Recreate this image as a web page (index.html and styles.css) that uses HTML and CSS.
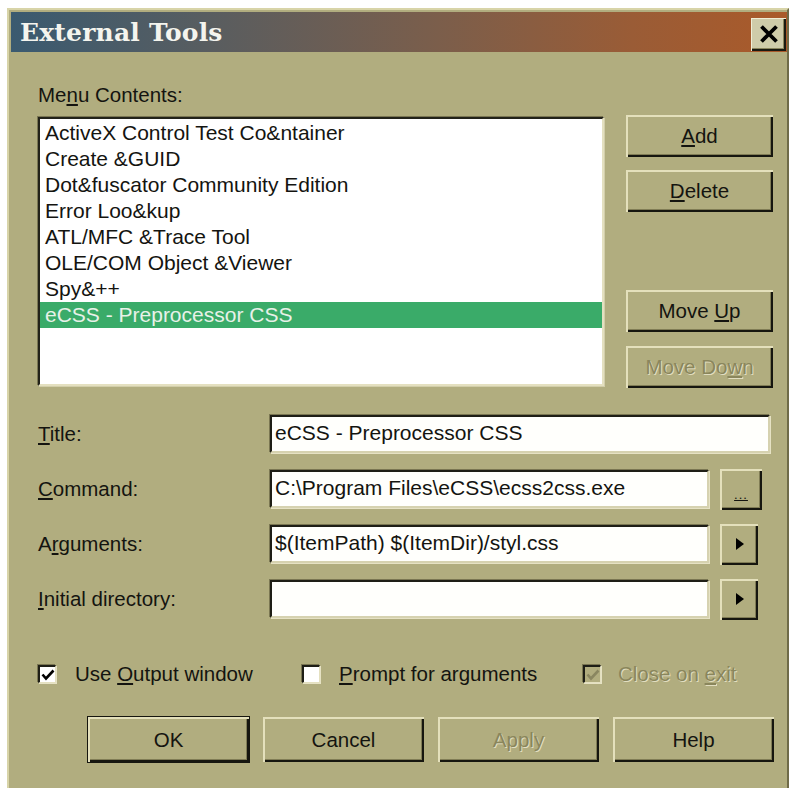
FILE: index.html
```html
<!DOCTYPE html>
<html>
<head>
<meta charset="utf-8">
<title>External Tools</title>
<link rel="stylesheet" href="styles.css">
</head>
<body>
<div class="window">
  <div class="titlebar">
    <span class="title">External Tools</span>
    <button class="close" aria-label="Close">
      <svg width="20" height="18" viewBox="0 0 20 18"><path d="M2.5 1.5 L17.5 16.5 M17.5 1.5 L2.5 16.5" stroke="#000" stroke-width="3.8" fill="none"/></svg>
    </button>
  </div>
  <div class="content">
    <div class="label menu-label">Me<u>n</u>u Contents:</div>
    <div class="list-row">
      <ul class="listbox">
        <li>ActiveX Control Test Co&amp;ntainer</li>
        <li>Create &amp;GUID</li>
        <li>Dot&amp;fuscator Community Edition</li>
        <li>Error Loo&amp;kup</li>
        <li>ATL/MFC &amp;Trace Tool</li>
        <li>OLE/COM Object &amp;Viewer</li>
        <li>Spy&amp;++</li>
        <li class="selected">eCSS - Preprocessor CSS</li>
      </ul>
      <div class="side-buttons">
        <button class="btn btn-add"><u>A</u>dd</button>
        <button class="btn btn-delete"><u>D</u>elete</button>
        <button class="btn btn-up">Move <u>U</u>p</button>
        <button class="btn btn-down disabled">Move Do<u>w</u>n</button>
      </div>
    </div>

    <div class="fields">
      <div class="label field-label"><u>T</u>itle:</div>
      <div class="field-wrap">
        <div class="input input-wide">eCSS - Preprocessor CSS</div>
      </div>

      <div class="label field-label"><u>C</u>ommand:</div>
      <div class="field-wrap">
        <div class="input">C:\Program Files\eCSS\ecss2css.exe</div>
        <button class="btn mini browse"><span class="dots">...</span></button>
      </div>

      <div class="label field-label">A<u>r</u>guments:</div>
      <div class="field-wrap">
        <div class="input">$(ItemPath) $(ItemDir)/styl.css</div>
        <button class="btn mini arrow"><span class="tri"></span></button>
      </div>

      <div class="label field-label"><u>I</u>nitial directory:</div>
      <div class="field-wrap">
        <div class="input"></div>
        <button class="btn mini arrow"><span class="tri"></span></button>
      </div>
    </div>

    <div class="checks">
      <div class="check check-output">
        <span class="box"><svg width="14" height="12" viewBox="0 0 14 12"><path d="M1.5 5.5 L5 9.5 L12.5 1.5" stroke="#000" stroke-width="2.6" fill="none"/></svg></span>
        <span class="label">Use <u>O</u>utput window</span>
      </div>
      <div class="check check-prompt">
        <span class="box"></span>
        <span class="label"><u>P</u>rompt for arguments</span>
      </div>
      <div class="check check-close disabled">
        <span class="box"><svg width="14" height="12" viewBox="0 0 14 12"><path d="M1.5 5.5 L5 9.5 L12.5 1.5" stroke="#8a8660" stroke-width="2.6" fill="none"/></svg></span>
        <span class="label">Close on <u>e</u>xit</span>
      </div>
    </div>

    <div class="actions">
      <button class="btn wide default">OK</button>
      <button class="btn wide">Cancel</button>
      <button class="btn wide disabled">Apply</button>
      <button class="btn wide">Help</button>
    </div>
  </div>
</div>
</body>
</html>
```

FILE: styles.css
```css
html, body {
  margin: 0;
  padding: 0;
  background: #ffffff;
}

body {
  font-family: "Liberation Sans", Arial, sans-serif;
  color: #141410;
}

.window {
  margin: 8px 0 0 7px;
  width: 782px;
  height: 790px;
  box-sizing: border-box;
  background: #b1ad7f;
  border-top: 2px solid #d8d4a8;
  border-left: 2px solid #d8d4a8;
  border-right: 2px solid #6f6b48;
  padding: 2px 0 0 2px;
}

/* caption bar */
.titlebar {
  height: 40px;
  width: 776px;
  display: flex;
  align-items: center;
  justify-content: space-between;
  background: linear-gradient(90deg, #3a5a70 0%, #585d60 25%, #7b5e4b 55%, #9a5c36 80%, #aa5a2a 100%);
  padding: 0 1px 0 9px;
  box-sizing: border-box;
}

.title {
  font-family: "DejaVu Serif", "Liberation Serif", serif;
  font-weight: bold;
  font-size: 25px;
  color: #f4f4ee;
  letter-spacing: 0.2px;
  margin-top: 1px;
}

.close {
  width: 35px;
  height: 33px;
  margin-top: 4px;
  padding: 0;
  display: flex;
  align-items: center;
  justify-content: center;
  background: #cfccaa;
  border: none;
  box-shadow: inset 1px 1px 0 #f0eed6, inset -2px -2px 0 #1a1a12, inset -3px -3px 0 #8a865e;
}

.content {
  padding: 32px 0 0 27px;
}

.label {
  font-size: 20.5px;
  line-height: 22px;
  white-space: nowrap;
}

u {
  text-decoration-thickness: 2px;
  text-underline-offset: 2px;
}

/* list + side buttons */
.list-row {
  display: flex;
  margin-top: 9px;
  height: 273px;
}

.listbox {
  list-style: none;
  margin: 2px 0 0 0;
  padding: 1px 0 0 0;
  width: 566px;
  height: 269px;
  box-sizing: border-box;
  background: #ffffff;
  border-top: 2px solid #222219;
  border-left: 2px solid #222219;
  border-right: 2px solid #e4e0c0;
  border-bottom: 2px solid #e4e0c0;
  box-shadow: -1px -1px 0 #7a7652, 1px 1px 0 #d2ceaa;
}

.listbox li {
  height: 26px;
  line-height: 26px;
  font-size: 21px;
  padding-left: 5px;
  white-space: nowrap;
}

.listbox li.selected {
  background: #3aab69;
  color: #e8f1e8;
}

.side-buttons {
  display: flex;
  flex-direction: column;
  margin-left: 22px;
}

.btn {
  font-family: "Liberation Sans", Arial, sans-serif;
  font-size: 20.5px;
  color: #141410;
  background: #b1ad7f;
  border: none;
  padding: 0;
  box-sizing: border-box;
  box-shadow: inset 2px 2px 0 #e4e0bc, inset -2px -2px 0 #16160f, inset -3px -3px 0 #807c55;
}

.side-buttons .btn {
  width: 147px;
  height: 42px;
}

.btn-delete { margin-top: 13px; }
.btn-up { margin-top: 78px; }
.btn-down { margin-top: 14px; }

.disabled,
.btn.disabled {
  color: #8a865c;
  text-shadow: 1px 1px 0 #e2dec0;
}

/* fields */
.fields {
  display: grid;
  grid-template-columns: 232px 1fr;
  row-gap: 17px;
  margin-top: 27px;
}

.field-label {
  align-self: center;
}

.field-wrap {
  display: flex;
  align-items: center;
  height: 38px;
}

.input {
  width: 439px;
  height: 38px;
  box-sizing: border-box;
  background: #fffffc;
  font-size: 21px;
  line-height: 32px;
  padding-left: 3px;
  white-space: nowrap;
  border-top: 2px solid #1e1e16;
  border-left: 2px solid #1e1e16;
  border-right: 2px solid #d6d2b0;
  border-bottom: 2px solid #d6d2b0;
  box-shadow: -1px -1px 0 #7a7652, 1px 1px 0 #e6e2c4;
}

.input-wide {
  width: 500px;
}

.btn.mini {
  height: 41px;
  margin-left: 11px;
  display: flex;
  align-items: center;
  justify-content: center;
}

.browse { width: 42px; }
.arrow { width: 38px; }

.dots {
  font-size: 13px;
  line-height: 1;
  margin-top: 10px;
  letter-spacing: 1px;
  text-decoration: underline;
}

.tri {
  width: 0;
  height: 0;
  border-top: 6px solid transparent;
  border-bottom: 6px solid transparent;
  border-left: 8px solid #000;
  margin-left: 2px;
}

/* checkboxes */
.checks {
  display: flex;
  align-items: center;
  margin-top: 45px;
  height: 22px;
}

.check {
  display: flex;
  align-items: center;
}

.check-output { width: 264px; }
.check-prompt { width: 281px; }

.box {
  width: 18px;
  height: 18px;
  box-sizing: border-box;
  background: #ffffff;
  border-top: 2px solid #1e1e16;
  border-left: 2px solid #1e1e16;
  border-right: 1px solid #e4e0c0;
  border-bottom: 1px solid #e4e0c0;
  box-shadow: -1px -1px 0 #7a7652, 1px 1px 0 #e6e2c4;
  display: flex;
  align-items: center;
  justify-content: center;
  margin-right: 19px;
}

.check-close .box {
  background: #b1ad7f;
  margin-right: 17px;
}

/* dialog buttons */
.actions {
  display: flex;
  gap: 14px;
  margin: 32px 0 0 50px;
}

.btn.wide {
  width: 161px;
  height: 45px;
}

.btn.default {
  box-shadow: 0 0 0 1px #16160f, inset 2px 2px 0 #e4e0bc, inset -2px -2px 0 #16160f, inset -3px -3px 0 #807c55;
}
```
